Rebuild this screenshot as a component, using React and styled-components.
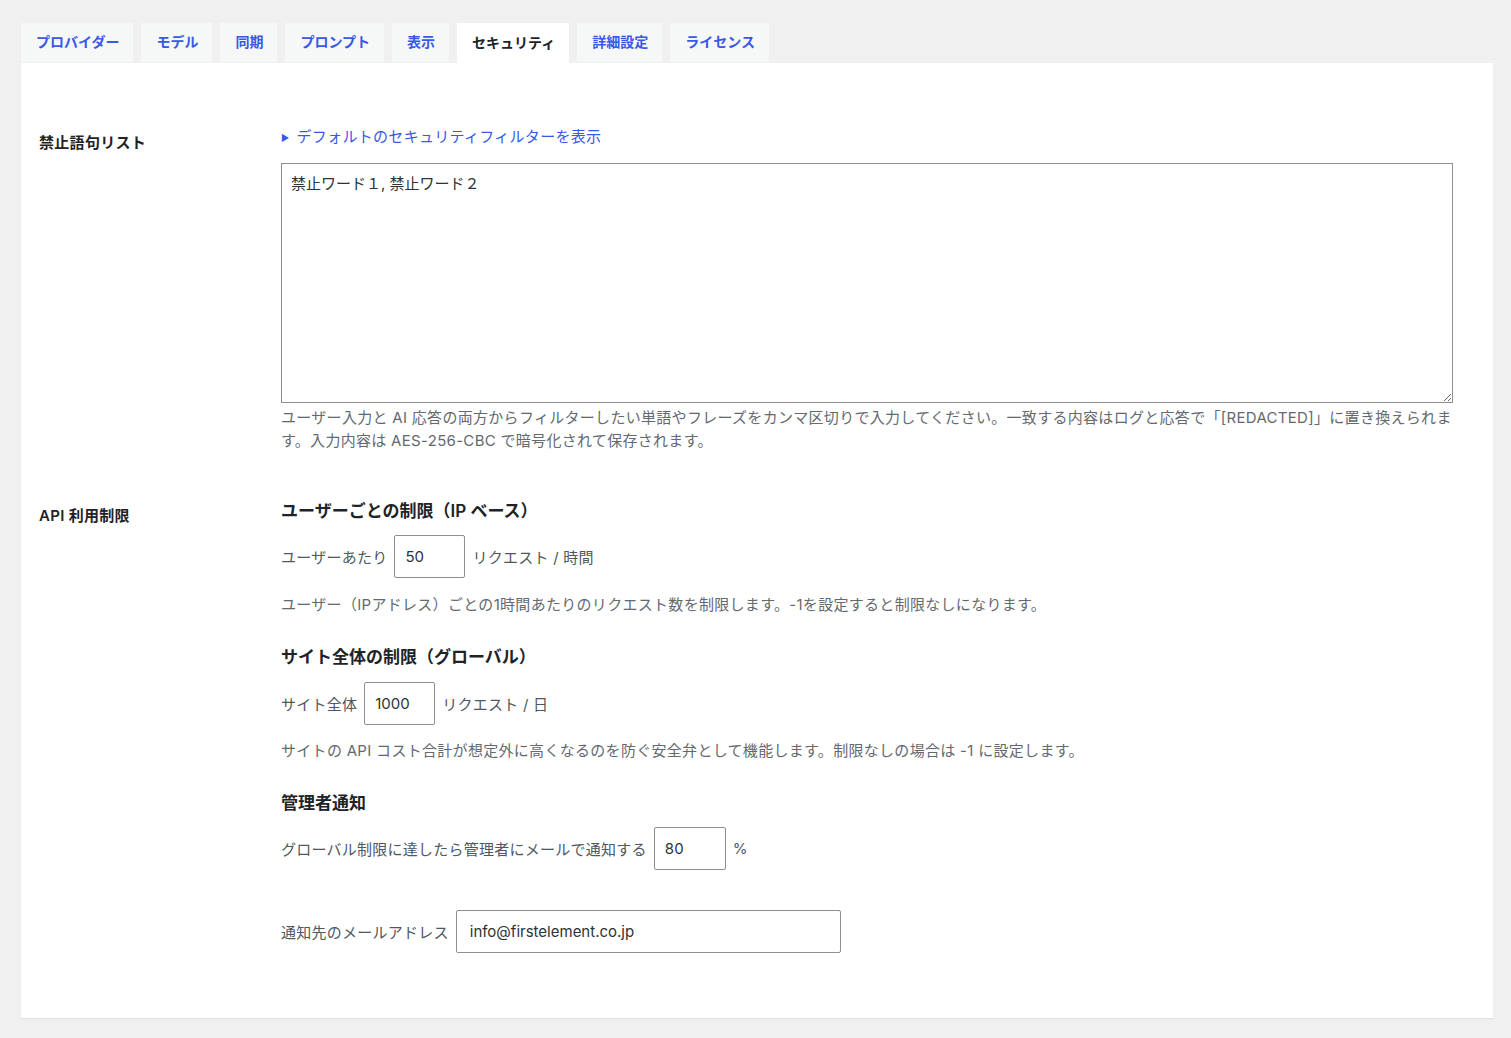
import React from "react";
import styled, { createGlobalStyle } from "styled-components";

const Global = createGlobalStyle`
  html, body { margin: 0; padding: 0; background: #f0f0f1; }
  body { font-family: "Inter", "Noto Sans CJK JP", sans-serif; color: #3c434a; }
  * { box-sizing: border-box; }
`;

const Wrap = styled.div`
  padding: 23px 18px 19px 21px;
`;

const TabBar = styled.nav`
  display: flex;
  align-items: flex-start;
  gap: 8px;
  height: 40px;
`;

const Tab = styled.a`
  display: flex;
  align-items: center;
  height: ${(p) => (p.$active ? "40px" : "39px")};
  padding: 0 14px 3px 15px;
  font-size: 14px;
  font-weight: 600;
  text-decoration: none;
  cursor: pointer;
  background: ${(p) => (p.$active ? "#ffffff" : "#f6f7f7")};
  color: ${(p) => (p.$active ? "#1d2327" : "#3858e9")};
`;

const Panel = styled.div`
  background: #ffffff;
  padding: 64px 40px 65px 18px;
  box-shadow: 0 1px 1px rgba(0, 0, 0, 0.06);
`;

const Row = styled.div`
  display: grid;
  grid-template-columns: 242px 1fr;
  margin-top: ${(p) => p.$top || 0}px;
`;

const Label = styled.div`
  font-size: 15px;
  font-weight: 600;
  line-height: 20px;
  letter-spacing: 0.3px;
  color: #1d2327;
  padding-top: ${(p) => p.$offset || 0}px;
`;

const Field = styled.div`
  display: flex;
  flex-direction: column;
  min-width: 0;
`;

const Summary = styled.div`
  display: flex;
  align-items: center;
  gap: 7px;
  font-size: 15px;
  line-height: 20px;
  letter-spacing: 0.3px;
  color: #3858e9;
  cursor: pointer;
`;

const Triangle = styled.span`
  font-size: 9px;
  line-height: 1;
  margin-top: 1px;
`;

const TextArea = styled.textarea`
  display: block;
  width: 100%;
  height: 240px;
  margin-top: 16px;
  padding: 10px 9px;
  font-family: "Inter", "Noto Sans CJK JP", sans-serif;
  font-size: 15px;
  line-height: 20px;
  color: #2c3338;
  border: 1px solid #8c8f94;
  border-radius: 0;
  background: #fff;
  resize: vertical;
`;

const Description = styled.p`
  margin: ${(p) => p.$top || 0}px 0 0;
  font-size: 15px;
  line-height: 23px;
  letter-spacing: 0.3px;
  color: #646970;
`;

const Heading = styled.h3`
  margin: ${(p) => p.$top || 0}px 0 0;
  font-size: 17px;
  font-weight: 600;
  line-height: 22px;
  color: #1d2327;
`;

const InlineRow = styled.div`
  display: flex;
  align-items: center;
  gap: 7px;
  margin-top: ${(p) => p.$top || 0}px;
  font-size: 15px;
  letter-spacing: 0.25px;
  color: #50575e;
`;

const Input = styled.input`
  width: ${(p) => p.$w}px;
  height: 43px;
  padding: 0 ${(p) => p.$pad || 10}px;
  font-family: "Inter", "Noto Sans CJK JP", sans-serif;
  font-size: 15px;
  color: #2c3338;
  border: 1px solid #8c8f94;
  border-radius: 2px;
  background: #fff;
  outline: none;
`;

const tabs = ["プロバイダー", "モデル", "同期", "プロンプト", "表示", "セキュリティ", "詳細設定", "ライセンス"];

export default function App() {
  return (
    <Wrap>
      <Global />
      <TabBar>
        {tabs.map((t) => (
          <Tab key={t} $active={t === "セキュリティ"}>{t}</Tab>
        ))}
      </TabBar>
      <Panel>
        <Row>
          <Label $offset={6}>禁止語句リスト</Label>
          <Field>
            <Summary>
              <Triangle>▶</Triangle>
              デフォルトのセキュリティフィルターを表示
            </Summary>
            <TextArea defaultValue="禁止ワード１, 禁止ワード２" />
            <Description $top={3}>
              ユーザー入力と AI 応答の両方からフィルターしたい単語やフレーズをカンマ区切りで入力してください。一致する内容はログと応答で「[REDACTED]」に置き換えられます。入力内容は AES-256-CBC で暗号化されて保存されます。
            </Description>
          </Field>
        </Row>
        <Row $top={48}>
          <Label $offset={6}>API 利用制限</Label>
          <Field>
            <Heading>ユーザーごとの制限（IP ベース）</Heading>
            <InlineRow $top={13}>
              ユーザーあたり
              <Input $w={71} defaultValue="50" />
              リクエスト / 時間
            </InlineRow>
            <Description $top={15}>
              ユーザー（IPアドレス）ごとの1時間あたりのリクエスト数を制限します。-1を設定すると制限なしになります。
            </Description>

            <Heading $top={30}>サイト全体の制限（グローバル）</Heading>
            <InlineRow $top={14}>
              サイト全体
              <Input $w={71} defaultValue="1000" />
              リクエスト / 日
            </InlineRow>
            <Description $top={14}>
              サイトの API コスト合計が想定外に高くなるのを防ぐ安全弁として機能します。制限なしの場合は -1 に設定します。
            </Description>

            <Heading $top={30}>管理者通知</Heading>
            <InlineRow $top={13}>
              グローバル制限に達したら管理者にメールで通知する
              <Input $w={72} defaultValue="80" />
              %
            </InlineRow>
            <InlineRow $top={40}>
              通知先のメールアドレス
              <Input $w={385} $pad={13} defaultValue="info@firstelement.co.jp" />
            </InlineRow>
          </Field>
        </Row>
      </Panel>
    </Wrap>
  );
}
